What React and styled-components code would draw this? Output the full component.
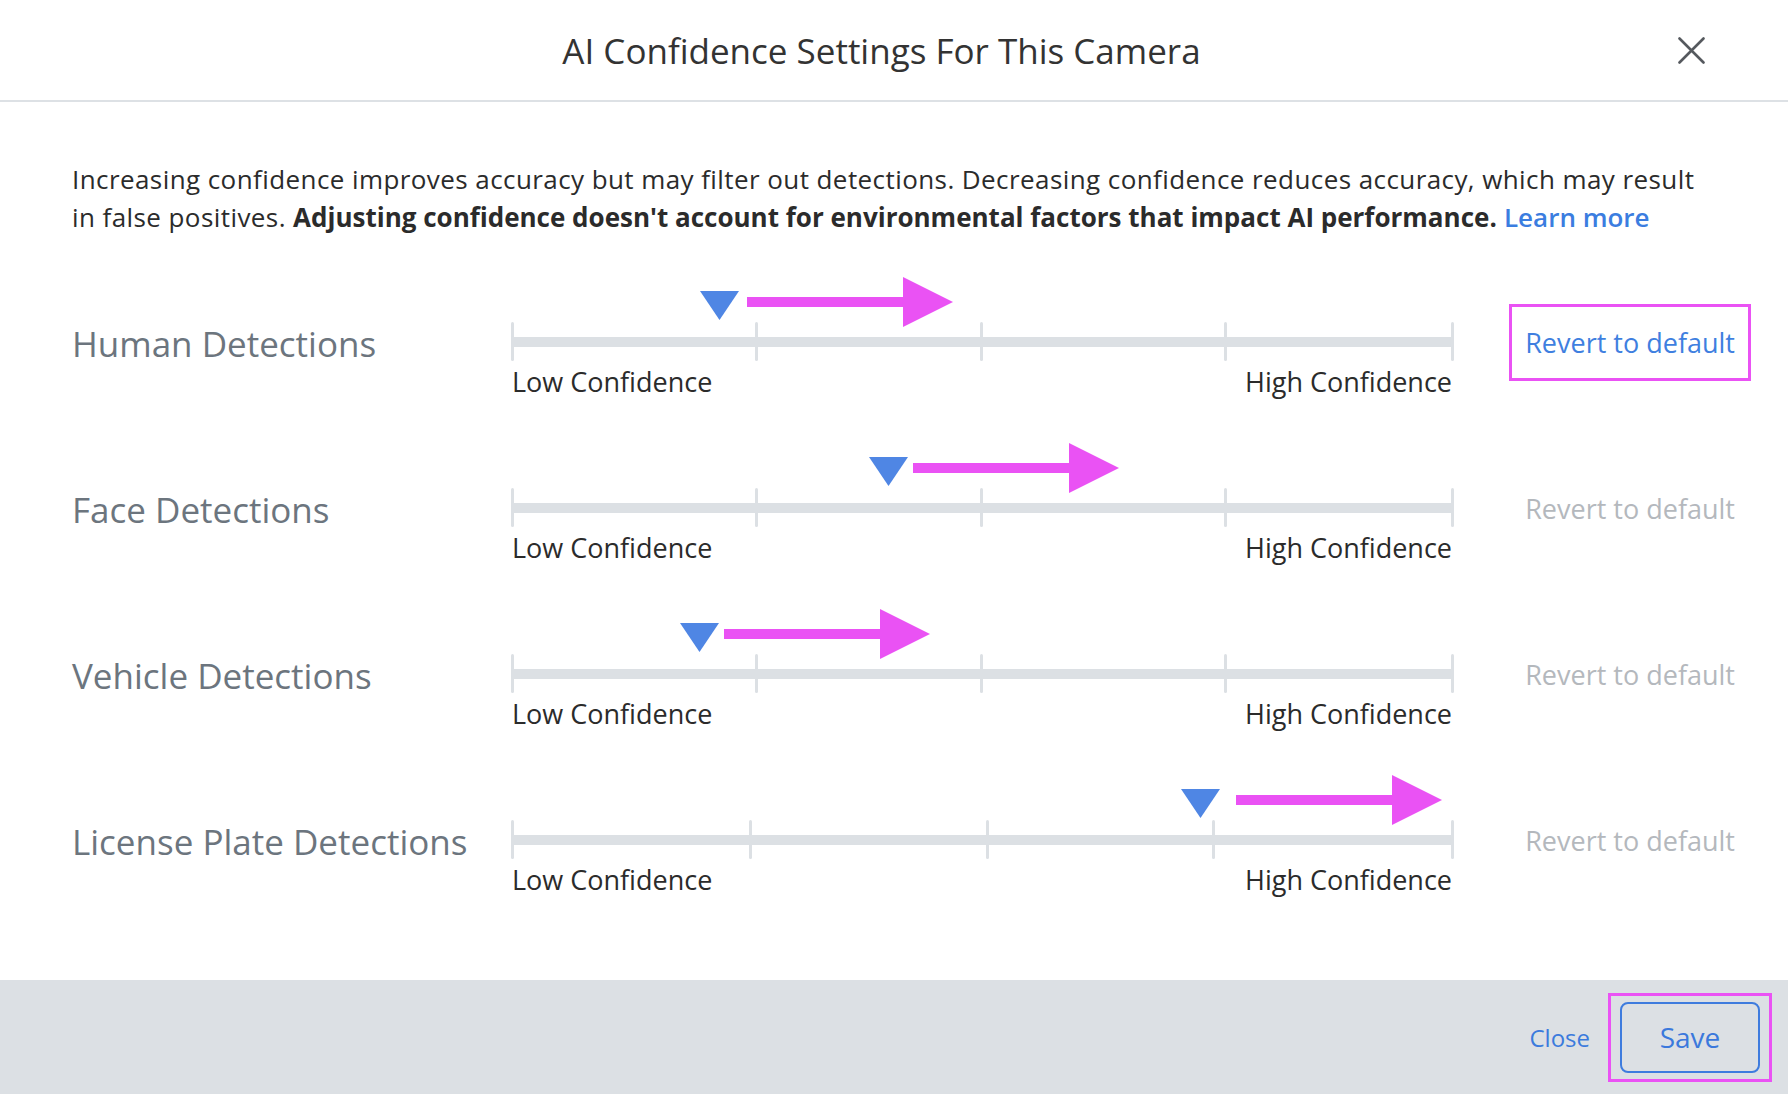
import React from "react";
import styled, { createGlobalStyle } from "styled-components";

const GlobalStyle = createGlobalStyle`
  html, body {
    margin: 0;
    padding: 0;
    background: #ffffff;
  }
  body {
    font-family: "Open Sans", "Noto Sans", sans-serif;
    color: #2b2b2b;
  }
`;

const detections = [
  {
    name: "Human Detections",
    marker: 207,
    arrow: 235,
    ticks: [244, 469, 713],
    highlighted: true,
  },
  {
    name: "Face Detections",
    marker: 376,
    arrow: 401,
    ticks: [244, 469, 713],
  },
  {
    name: "Vehicle Detections",
    marker: 187,
    arrow: 212,
    ticks: [244, 469, 713],
  },
  {
    name: "License Plate Detections",
    marker: 688,
    arrow: 724,
    ticks: [238, 475, 701],
  },
];

const CloseIcon = () => (
  <svg width="27" height="27" viewBox="0 0 27 27">
    <path
      d="M1.5 1.5 L25.5 25.5 M25.5 1.5 L1.5 25.5"
      stroke="#55595e"
      strokeWidth="2.6"
      strokeLinecap="round"
    />
  </svg>
);

const PointerArrow = () => (
  <svg width="206" height="50" viewBox="0 0 206 50">
    <rect x="0" y="20" width="160" height="10" fill="#ea52f4" />
    <polygon points="156,0 206,25 156,50" fill="#ea52f4" />
  </svg>
);

const Marker = () => (
  <svg width="39" height="29" viewBox="0 0 39 29">
    <polygon points="0,0 39,0 19.5,29" fill="#4f86e4" />
  </svg>
);

const ConfidenceSlider = ({ marker, arrow, ticks }) => (
  <SliderColumn>
    <MarkerLane>
      <MarkerSlot style={{ left: marker - 19.5 }}>
        <Marker />
      </MarkerSlot>
      <ArrowSlot style={{ left: arrow }}>
        <PointerArrow />
      </ArrowSlot>
    </MarkerLane>
    <Track>
      <Bar />
      <Tick style={{ left: 0 }} />
      {ticks.map((t) => (
        <Tick key={t} style={{ left: t }} />
      ))}
      <Tick style={{ left: 940 }} />
    </Track>
    <ScaleLabels>
      <span>Low Confidence</span>
      <span>High Confidence</span>
    </ScaleLabels>
  </SliderColumn>
);

const App = () => {
  return (
    <>
      <GlobalStyle />
      <Modal>
        <Header>
          <Title>AI Confidence Settings For This Camera</Title>
          <IconButton aria-label="Close">
            <CloseIcon />
          </IconButton>
        </Header>
        <Body>
          <Description>
            Increasing confidence improves accuracy but may filter out
            detections. Decreasing confidence reduces accuracy, which may result
            <br />
            in false positives.{" "}
            <strong>
              Adjusting confidence doesn't account for environmental factors
              that impact AI performance.
            </strong>{" "}
            <LearnMore href="#">Learn more</LearnMore>
          </Description>
          <Rows>
            {detections.map((d) => (
              <Row key={d.name}>
                <RowLabel>{d.name}</RowLabel>
                <ConfidenceSlider
                  marker={d.marker}
                  arrow={d.arrow}
                  ticks={d.ticks}
                />
                <RevertButton $active={d.highlighted}>
                  Revert to default
                </RevertButton>
              </Row>
            ))}
          </Rows>
        </Body>
        <Footer>
          <FooterLink>Close</FooterLink>
          <Highlight>
            <SaveButton>Save</SaveButton>
          </Highlight>
        </Footer>
      </Modal>
    </>
  );
};

const Modal = styled.div`
  width: 100%;
  min-height: 100vh;
  display: flex;
  flex-direction: column;
  background: #ffffff;
`;

const Header = styled.header`
  height: 100px;
  display: flex;
  align-items: center;
  padding: 0 83px 0 85px;
  border-bottom: 2px solid #dde1e5;
`;

const Title = styled.h1`
  flex: 1;
  margin: 0;
  text-align: center;
  font-size: 35px;
  font-weight: 400;
  color: #333333;
`;

const IconButton = styled.button`
  width: 27px;
  height: 27px;
  padding: 0;
  border: none;
  background: none;
  display: flex;
  cursor: pointer;
`;

const Body = styled.main`
  padding: 58px 37px 0 72px;
`;

const Description = styled.p`
  margin: 0;
  font-size: 26px;
  line-height: 38px;
  letter-spacing: 0.42px;
  color: #2b2b2b;

  strong {
    font-weight: 700;
    letter-spacing: 0;
  }
`;

const LearnMore = styled.a`
  color: #3b7de0;
  font-weight: 600;
  letter-spacing: 0;
  text-decoration: none;
`;

const Rows = styled.div`
  margin-top: 40px;
  display: flex;
  flex-direction: column;
  gap: 43px;
`;

const Row = styled.div`
  display: grid;
  grid-template-columns: 440px 940px 1fr;
  align-items: start;
`;

const RowLabel = styled.div`
  margin-top: 45px;
  line-height: 46px;
  font-size: 35px;
  color: #6c757e;
`;

const SliderColumn = styled.div`
  display: flex;
  flex-direction: column;
`;

const MarkerLane = styled.div`
  position: relative;
  height: 46px;
`;

const MarkerSlot = styled.div`
  position: absolute;
  top: 15px;
  display: flex;
`;

const ArrowSlot = styled.div`
  position: absolute;
  top: 1px;
  display: flex;
`;

const Track = styled.div`
  position: relative;
  height: 39px;
`;

const Bar = styled.div`
  position: absolute;
  left: 0;
  right: 0;
  top: 15px;
  height: 10px;
  background: #dce0e4;
`;

const Tick = styled.span`
  position: absolute;
  top: 0;
  width: 3px;
  height: 39px;
  margin-left: -1.5px;
  border-radius: 2px;
  background: #dce0e4;
`;

const ScaleLabels = styled.div`
  margin-top: 4px;
  display: flex;
  justify-content: space-between;
  font-size: 27px;
  line-height: 34px;
  color: #2b2b2b;
`;

const RevertButton = styled.button`
  justify-self: end;
  margin-top: 28px;
  height: 77px;
  padding: 0 13px;
  border: 3px solid ${(props) => (props.$active ? "#ea52f4" : "transparent")};
  background: none;
  font-family: inherit;
  font-size: 27px;
  color: ${(props) => (props.$active ? "#3f7fe0" : "#b4b8bd")};
  cursor: pointer;
`;

const Footer = styled.footer`
  margin-top: auto;
  height: 114px;
  display: flex;
  align-items: center;
  justify-content: flex-end;
  gap: 18px;
  padding-right: 16px;
  background: #dce0e4;
`;

const FooterLink = styled.button`
  border: none;
  background: none;
  padding: 0;
  font-family: inherit;
  font-size: 24px;
  color: #3b7bdd;
  cursor: pointer;
`;

const Highlight = styled.div`
  display: flex;
  padding: 6px 9px;
  border: 3px solid #ea52f4;
`;

const SaveButton = styled.button`
  width: 140px;
  height: 71px;
  border: 2px solid #3e7cde;
  border-radius: 8px;
  background: transparent;
  font-family: inherit;
  font-size: 28px;
  color: #3b79dc;
  cursor: pointer;
`;

export default App;
